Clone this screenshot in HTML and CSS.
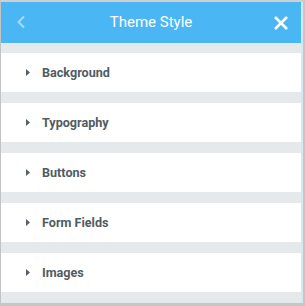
FILE: index.html
```html
<!DOCTYPE html>
<html>
<head>
<meta charset="utf-8">
<link rel="stylesheet" href="styles.css">
</head>
<body>
<div class="frame">
  <div class="panel">
    <header class="header">
      <span class="back">
        <svg width="10" height="14" viewBox="0 0 10 14"><path d="M8 1.5 L2.5 7 L8 12.5" fill="none" stroke="#a6dbf9" stroke-width="2"/></svg>
      </span>
      <span class="title">Theme Style</span>
      <span class="close">
        <svg width="16" height="16" viewBox="0 0 16 16"><path d="M2 2 L14 14 M14 2 L2 14" fill="none" stroke="#fff" stroke-width="2.6"/></svg>
      </span>
    </header>
    <div class="sections">
      <div class="section"><svg class="caret" width="4" height="7" viewBox="0 0 4 7"><path d="M0 0 L4 3.5 L0 7 Z" fill="#556068"/></svg><span>Background</span></div>
      <div class="section"><svg class="caret" width="4" height="7" viewBox="0 0 4 7"><path d="M0 0 L4 3.5 L0 7 Z" fill="#556068"/></svg><span>Typography</span></div>
      <div class="section"><svg class="caret" width="4" height="7" viewBox="0 0 4 7"><path d="M0 0 L4 3.5 L0 7 Z" fill="#556068"/></svg><span>Buttons</span></div>
      <div class="section"><svg class="caret" width="4" height="7" viewBox="0 0 4 7"><path d="M0 0 L4 3.5 L0 7 Z" fill="#556068"/></svg><span>Form Fields</span></div>
      <div class="section"><svg class="caret" width="4" height="7" viewBox="0 0 4 7"><path d="M0 0 L4 3.5 L0 7 Z" fill="#556068"/></svg><span>Images</span></div>
    </div>
  </div>
</div>
</body>
</html>
```

FILE: styles.css
```css
html, body {
  margin: 0;
  padding: 0;
  background: #ffffff;
}
body {
  width: 305px;
  height: 306px;
  overflow: hidden;
  font-family: Roboto, "Liberation Sans", Arial, sans-serif;
}
.frame {
  box-sizing: border-box;
  width: 305px;
  height: 306px;
  border-top: 2px solid #cfcfcf;
  border-left: 1px solid #c3c3c3;
  border-right: 2px solid #c6c6c6;
  border-bottom: 3px solid #c6c6c6;
}
.panel {
  box-sizing: border-box;
  height: 100%;
  border-right: 2px solid #d3e8ef;
  background: #e6e9ec;
  display: flex;
  flex-direction: column;
}
.header {
  height: 41px;
  flex: none;
  background: #4ab7f4;
  display: flex;
  align-items: center;
  justify-content: space-between;
  padding: 0 12px 0 15px;
  position: relative;
}
.back, .close {
  display: flex;
  align-items: center;
}
.back svg { margin-top: -1px; }
.title {
  position: absolute;
  left: 0;
  right: 0;
  text-align: center;
  color: #ffffff;
  font-size: 15px;
  line-height: 41px;
  pointer-events: none;
}
.sections {
  display: flex;
  flex-direction: column;
  gap: 11px;
  padding-top: 10px;
}
.section {
  height: 39px;
  background: #ffffff;
  display: flex;
  align-items: center;
  padding-left: 25px;
  color: #515b64;
  font-size: 12.6px;
  font-weight: 700;
}
.caret {
  margin-right: 12px;
}
```
